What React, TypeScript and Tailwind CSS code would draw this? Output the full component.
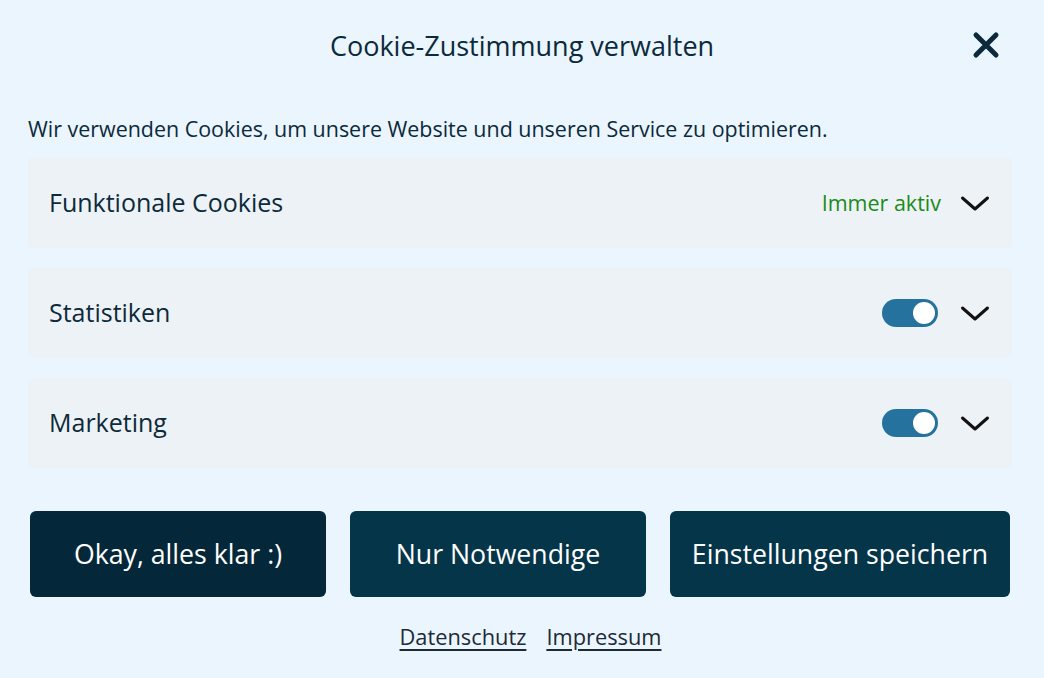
import React, { useState } from 'react';

const font = { fontFamily: '"Open Sans", "Liberation Sans", sans-serif' };

function Chevron() {
  return (
    <svg width="30" height="20" viewBox="0 0 30 20" fill="none" className="shrink-0">
      <path d="M2.5 5 L15 16 L27.5 5" stroke="#111" strokeWidth="3" strokeLinecap="round" strokeLinejoin="round" />
    </svg>
  );
}

function Toggle({ on, onClick }: { on: boolean; onClick: () => void }) {
  return (
    <button
      onClick={onClick}
      className={`w-[56px] h-[28px] rounded-full flex items-center px-[3px] ${on ? 'bg-[#26729e] justify-end' : 'bg-[#b8c2cc] justify-start'}`}
    >
      <span className="w-[22px] h-[22px] rounded-full bg-white block" />
    </button>
  );
}

function Panel({ title, right }: { title: string; right: React.ReactNode }) {
  return (
    <div className="h-[90px] bg-[#edf2f6] rounded-[2px] flex items-center justify-between pl-[21px] pr-[22px]">
      <span className="text-[25px] text-[#0c2a3a]">{title}</span>
      <div className="flex items-center gap-[22px]">
        {right}
        <Chevron />
      </div>
    </div>
  );
}

export default function App() {
  const [stats, setStats] = useState(true);
  const [marketing, setMarketing] = useState(true);

  return (
    <div className="w-[1044px] h-[678px] bg-[#eaf5fe] flex flex-col pl-[28px] pr-[32px] pt-[26px]" style={font}>
      {/* Header */}
      <div className="relative flex items-center justify-center h-[40px] pl-[4px]">
        <h1 className="text-[27px] text-[#0c2a3a]">Cookie-Zustimmung verwalten</h1>
        <button className="absolute right-[11px] top-[4px] text-[#0c2a3a]">
          <svg width="30" height="30" viewBox="0 0 30 30">
            <path d="M5 5 L25 25 M25 5 L5 25" stroke="#0c2a3a" strokeWidth="5" strokeLinecap="round" />
          </svg>
        </button>
      </div>

      <p className="mt-[50px] text-[21.45px] leading-[26px] text-[#0c2a3a]">
        Wir verwenden Cookies, um unsere Website und unseren Service zu optimieren.
      </p>

      <div className="mt-[16px] flex flex-col gap-[20px]">
        <Panel title="Funktionale Cookies" right={<span className="text-[21.5px] text-[#1b8a1b] mr-[-3px]">Immer aktiv</span>} />
        <Panel title="Statistiken" right={<Toggle on={stats} onClick={() => setStats(!stats)} />} />
        <Panel title="Marketing" right={<Toggle on={marketing} onClick={() => setMarketing(!marketing)} />} />
      </div>

      <div className="mt-[43px] flex gap-[24px] px-[2px]">
        <button className="w-[296px] h-[86px] rounded-[6px] bg-[#04283a] text-white text-[26.7px]">Okay, alles klar :)</button>
        <button className="w-[296px] h-[86px] rounded-[6px] bg-[#053549] text-white text-[26.7px]">Nur Notwendige</button>
        <button className="w-[340px] h-[86px] rounded-[6px] bg-[#053549] text-white text-[26.7px]">Einstellungen speichern</button>
      </div>

      <div className="mt-[24px] flex justify-center gap-[20px] pl-[21px]">
        <a href="#" className="text-[21.8px] text-[#1e2a36] underline underline-offset-[4px]">Datenschutz</a>
        <a href="#" className="text-[21.8px] text-[#1e2a36] underline underline-offset-[4px]">Impressum</a>
      </div>
    </div>
  );
}
